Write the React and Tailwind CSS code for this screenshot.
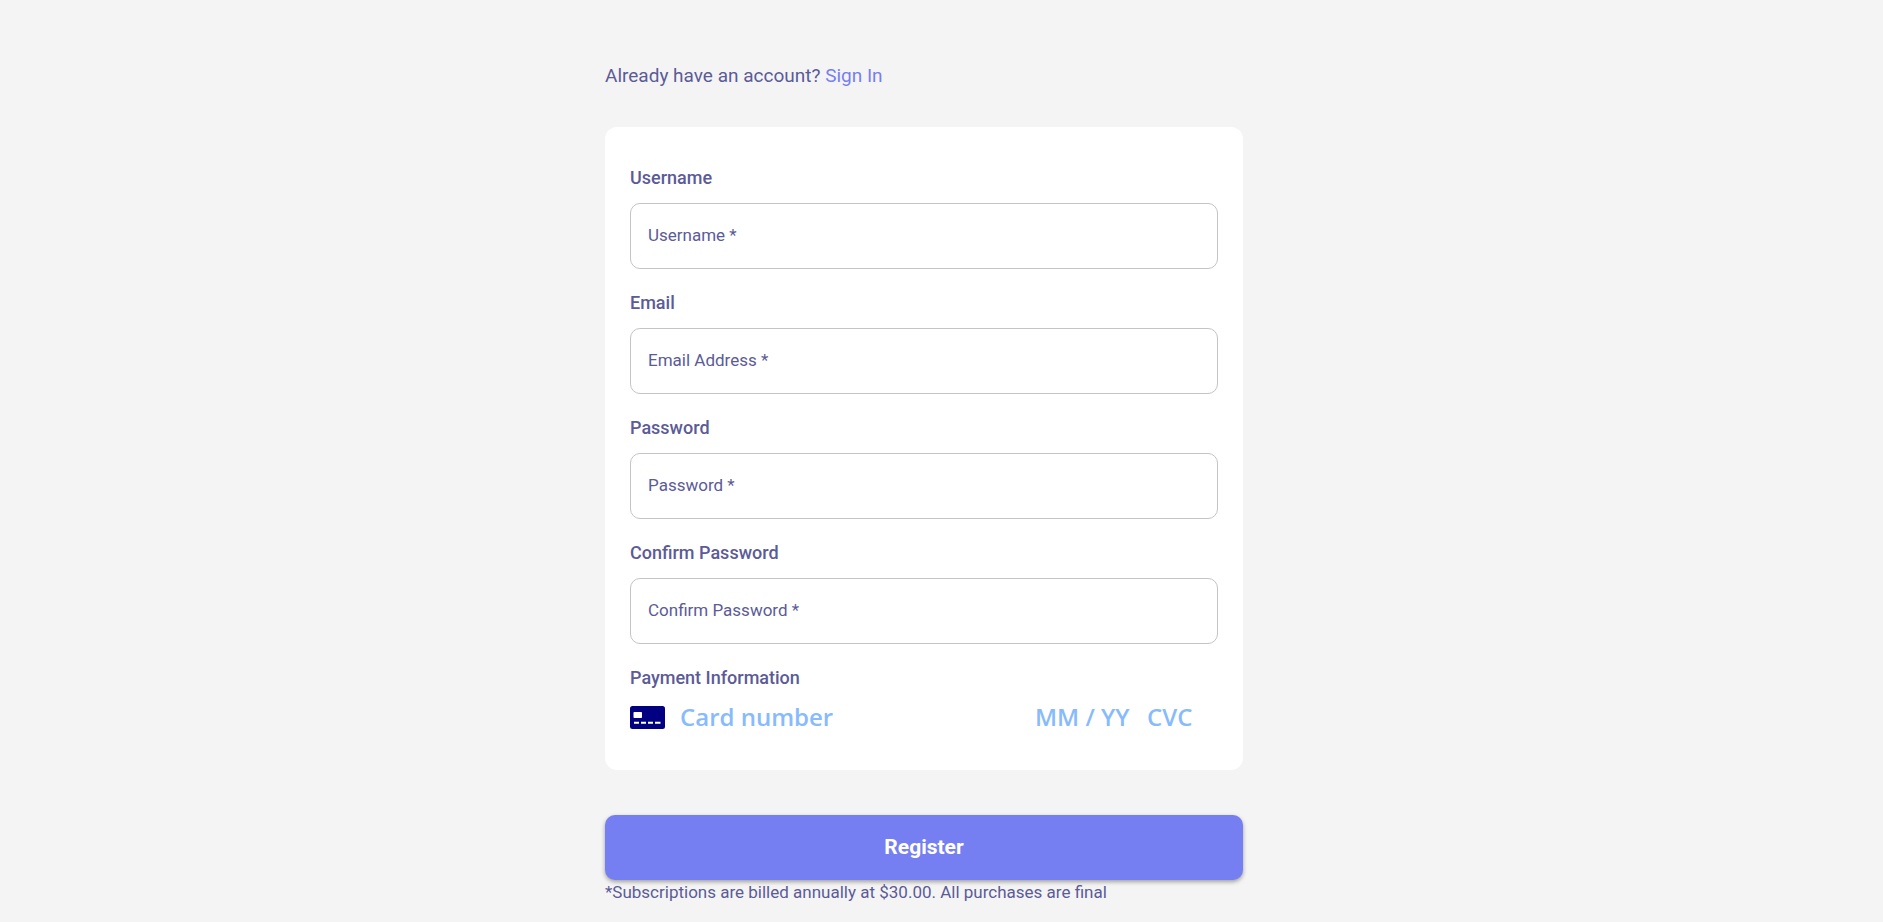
const fields = [
  { id: "username", label: "Username", placeholder: "Username *", type: "text" },
  { id: "email", label: "Email", placeholder: "Email Address *", type: "email" },
  { id: "password", label: "Password", placeholder: "Password *", type: "password" },
  { id: "confirm", label: "Confirm Password", placeholder: "Confirm Password *", type: "password" },
];

function CardIcon() {
  return (
    <svg aria-hidden="true" viewBox="0 0 35 23" className="h-[23px] w-[35px] shrink-0">
      <rect width="35" height="23" rx="2.5" fill="#000080" />
      <rect x="3.5" y="6" width="8.5" height="6" rx="0.8" fill="#fff" />
      <path d="M4 16.8h5M11 16.8h5M18 16.8h5M25 16.8h5.5" stroke="#fff" strokeWidth="2" strokeLinecap="butt" />
    </svg>
  );
}

function Field({ id, label, placeholder, type }) {
  return (
    <div>
      <label htmlFor={id} className="block text-lg leading-[26px] font-medium">
        {label}
      </label>
      <input
        id={id}
        type={type}
        required
        placeholder={placeholder}
        className="mt-3 block h-[66px] w-full rounded-[10px] border border-[#c4c4c4] bg-white px-[17px] pb-0.5 text-[17px] shadow-none outline-none placeholder:text-[#5b5b98] focus:border-[#767ff2]"
      />
    </div>
  );
}

const cardInput =
  "bg-transparent font-['Open_Sans','Noto_Sans',sans-serif] text-2xl font-semibold text-[#000080] outline-none placeholder:text-[#87bbfd]";

export default function App() {
  return (
    <div className="min-h-screen bg-[#f4f4f4] pr-[35px] pt-[61px] font-[Roboto,sans-serif] text-[#5b5b98]">
      <form className="mx-auto max-w-[638px]">
        <p className="text-[19px] leading-[30px]">
          Already have an account?{" "}
          <a href="#signin" className="text-[#767ff2]">Sign In</a>
        </p>

        <div className="mt-9 flex flex-col gap-[21px] rounded-xl bg-white px-[25px] pt-[38px] pb-[34px]">
          {fields.map((field) => (
            <Field key={field.id} {...field} />
          ))}
          <fieldset>
            <legend className="text-lg leading-[26px] font-medium">Payment Information</legend>
            <div className="mt-[7px] flex h-[38px] items-center">
              <CardIcon />
              <input aria-label="Card number" placeholder="Card number" className={`ml-[15px] min-w-0 flex-1 ${cardInput}`} />
              <input aria-label="Expiry date" placeholder="MM / YY" className={`w-28 ${cardInput}`} />
              <input aria-label="CVC" placeholder="CVC" className={`w-[71px] ${cardInput}`} />
            </div>
          </fieldset>
        </div>

        <button
          type="submit"
          className="mt-[45px] block h-[65px] w-full rounded-[10px] bg-[#767ff2] text-[21px] font-bold text-white shadow-[0_2px_4px_rgba(0,0,0,0.35)]"
        >
          Register
        </button>
        <p className="text-[17px] leading-6">
          *Subscriptions are billed annually at $30.00. All purchases are final
        </p>
      </form>
    </div>
  );
}
